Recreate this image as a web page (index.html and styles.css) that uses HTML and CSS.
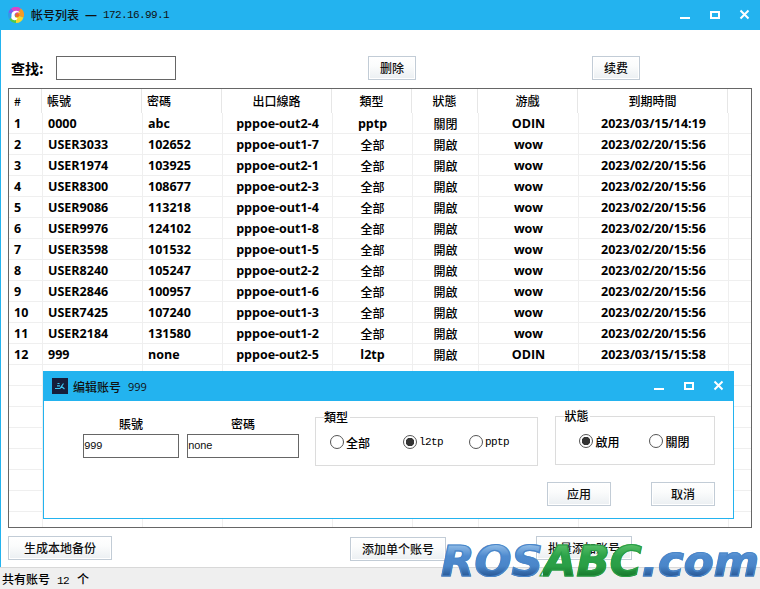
FILE: index.html
```html
<!DOCTYPE html>
<html lang="zh">
<head>
<meta charset="utf-8">
<title>帐号列表</title>
<link rel="stylesheet" href="styles.css">
</head>
<body>
<div class="window">
  <header class="titlebar">
    <svg class="logo" viewBox="0 0 16 16" width="16" height="16">
      <path d="M8 8 L3 1.6 A8 8 0 0 1 13 1.6 Z" fill="#d946c8"/>
      <path d="M8 8 L13 1.6 A8 8 0 0 1 15.5 10.5 Z" fill="#f59a23"/>
      <path d="M8 8 L15.5 10.5 A8 8 0 0 1 8 16 Z" fill="#f4d92e"/>
      <path d="M8 8 L8 16 A8 8 0 0 1 1.2 12 Z" fill="#4fc94a"/>
      <path d="M8 8 L1.2 12 A8 8 0 0 1 0.4 5.5 Z" fill="#2f9be8"/>
      <path d="M8 8 L0.4 5.5 A8 8 0 0 1 3 1.6 Z" fill="#7a5cf0"/>
      <path d="M3.5 9 A4.6 4.6 0 0 1 12 6 A4 4 0 0 0 7 6.4 A3 3 0 0 0 9.6 11 A3 3 0 0 1 3.5 9 Z" fill="#fff"/>
      <circle cx="9.2" cy="8.2" r="2" fill="#f0682a"/>
    </svg>
    <span class="title-text">帐号列表</span>
    <span class="title-dash">一</span>
    <span class="mono title-ip">172.16.99.1</span>
    <div class="controls">
      <svg viewBox="0 0 30 30" width="30" height="30"><path d="M10 18H20" /></svg>
      <svg viewBox="0 0 30 30" width="30" height="30"><rect x="11" y="12" width="8" height="6"/></svg>
      <svg viewBox="0 0 30 30" width="30" height="30"><path d="M10.5 10.5L18.5 18.5M18.5 10.5L10.5 18.5"/></svg>
    </div>
  </header>

  <main class="content">
    <div class="toolbar">
      <label class="search-label">查找:</label>
      <input class="field search-input" type="text">
      <button class="btn btn-delete">删除</button>
      <button class="btn btn-renew">续费</button>
    </div>

    <div class="table">
      <div class="row head">
        <div class="cell l">#</div><div class="cell l">帳號</div><div class="cell l">密碼</div><div class="cell">出口線路</div><div class="cell">類型</div><div class="cell">狀態</div><div class="cell">游戲</div><div class="cell">到期時間</div><div class="cell"></div>
      </div>
      <div class="row"><div class="cell l b">1</div><div class="cell l b">0000</div><div class="cell l b">abc</div><div class="cell b">pppoe-out2-4</div><div class="cell b">pptp</div><div class="cell">關閉</div><div class="cell b">ODIN</div><div class="cell b">2023/03/15/14:19</div><div class="cell"></div></div>
      <div class="row"><div class="cell l b">2</div><div class="cell l b">USER3033</div><div class="cell l b">102652</div><div class="cell b">pppoe-out1-7</div><div class="cell">全部</div><div class="cell">開啟</div><div class="cell b">wow</div><div class="cell b">2023/02/20/15:56</div><div class="cell"></div></div>
      <div class="row"><div class="cell l b">3</div><div class="cell l b">USER1974</div><div class="cell l b">103925</div><div class="cell b">pppoe-out2-1</div><div class="cell">全部</div><div class="cell">開啟</div><div class="cell b">wow</div><div class="cell b">2023/02/20/15:56</div><div class="cell"></div></div>
      <div class="row"><div class="cell l b">4</div><div class="cell l b">USER8300</div><div class="cell l b">108677</div><div class="cell b">pppoe-out2-3</div><div class="cell">全部</div><div class="cell">開啟</div><div class="cell b">wow</div><div class="cell b">2023/02/20/15:56</div><div class="cell"></div></div>
      <div class="row"><div class="cell l b">5</div><div class="cell l b">USER9086</div><div class="cell l b">113218</div><div class="cell b">pppoe-out1-4</div><div class="cell">全部</div><div class="cell">開啟</div><div class="cell b">wow</div><div class="cell b">2023/02/20/15:56</div><div class="cell"></div></div>
      <div class="row"><div class="cell l b">6</div><div class="cell l b">USER9976</div><div class="cell l b">124102</div><div class="cell b">pppoe-out1-8</div><div class="cell">全部</div><div class="cell">開啟</div><div class="cell b">wow</div><div class="cell b">2023/02/20/15:56</div><div class="cell"></div></div>
      <div class="row"><div class="cell l b">7</div><div class="cell l b">USER3598</div><div class="cell l b">101532</div><div class="cell b">pppoe-out1-5</div><div class="cell">全部</div><div class="cell">開啟</div><div class="cell b">wow</div><div class="cell b">2023/02/20/15:56</div><div class="cell"></div></div>
      <div class="row"><div class="cell l b">8</div><div class="cell l b">USER8240</div><div class="cell l b">105247</div><div class="cell b">pppoe-out2-2</div><div class="cell">全部</div><div class="cell">開啟</div><div class="cell b">wow</div><div class="cell b">2023/02/20/15:56</div><div class="cell"></div></div>
      <div class="row"><div class="cell l b">9</div><div class="cell l b">USER2846</div><div class="cell l b">100957</div><div class="cell b">pppoe-out1-6</div><div class="cell">全部</div><div class="cell">開啟</div><div class="cell b">wow</div><div class="cell b">2023/02/20/15:56</div><div class="cell"></div></div>
      <div class="row"><div class="cell l b">10</div><div class="cell l b">USER7425</div><div class="cell l b">107240</div><div class="cell b">pppoe-out1-3</div><div class="cell">全部</div><div class="cell">開啟</div><div class="cell b">wow</div><div class="cell b">2023/02/20/15:56</div><div class="cell"></div></div>
      <div class="row"><div class="cell l b">11</div><div class="cell l b">USER2184</div><div class="cell l b">131580</div><div class="cell b">pppoe-out1-2</div><div class="cell">全部</div><div class="cell">開啟</div><div class="cell b">wow</div><div class="cell b">2023/02/20/15:56</div><div class="cell"></div></div>
      <div class="row"><div class="cell l b">12</div><div class="cell l b">999</div><div class="cell l b">none</div><div class="cell b">pppoe-out2-5</div><div class="cell b">l2tp</div><div class="cell">開啟</div><div class="cell b">ODIN</div><div class="cell b">2023/03/15/15:58</div><div class="cell"></div></div>
      <div class="row"><div class="cell"></div><div class="cell"></div><div class="cell"></div><div class="cell"></div><div class="cell"></div><div class="cell"></div><div class="cell"></div><div class="cell"></div><div class="cell"></div></div>
      <div class="row"><div class="cell"></div><div class="cell"></div><div class="cell"></div><div class="cell"></div><div class="cell"></div><div class="cell"></div><div class="cell"></div><div class="cell"></div><div class="cell"></div></div>
      <div class="row"><div class="cell"></div><div class="cell"></div><div class="cell"></div><div class="cell"></div><div class="cell"></div><div class="cell"></div><div class="cell"></div><div class="cell"></div><div class="cell"></div></div>
      <div class="row"><div class="cell"></div><div class="cell"></div><div class="cell"></div><div class="cell"></div><div class="cell"></div><div class="cell"></div><div class="cell"></div><div class="cell"></div><div class="cell"></div></div>
      <div class="row"><div class="cell"></div><div class="cell"></div><div class="cell"></div><div class="cell"></div><div class="cell"></div><div class="cell"></div><div class="cell"></div><div class="cell"></div><div class="cell"></div></div>
      <div class="row"><div class="cell"></div><div class="cell"></div><div class="cell"></div><div class="cell"></div><div class="cell"></div><div class="cell"></div><div class="cell"></div><div class="cell"></div><div class="cell"></div></div>
      <div class="row"><div class="cell"></div><div class="cell"></div><div class="cell"></div><div class="cell"></div><div class="cell"></div><div class="cell"></div><div class="cell"></div><div class="cell"></div><div class="cell"></div></div>
      <div class="row"><div class="cell"></div><div class="cell"></div><div class="cell"></div><div class="cell"></div><div class="cell"></div><div class="cell"></div><div class="cell"></div><div class="cell"></div><div class="cell"></div></div>
    </div>

    <div class="actions">
      <button class="btn btn-backup">生成本地备份</button>
      <button class="btn btn-single">添加单个账号</button>
      <button class="btn btn-batch">批量添加账号</button>
    </div>
  </main>

  <footer class="status">共有账号<span class="mono status-num">12</span>个</footer>
</div>

<section class="dialog">
  <header class="titlebar dialog-bar">
    <svg class="dialog-icon" viewBox="0 0 16 16" width="16" height="16">
      <rect width="16" height="16" fill="#161d3a"/>
      <path d="M3 10.5H8L11.5 5.5M7.5 5.5H5.5M8 7.8H5M9 8L12.5 11" fill="none" stroke="#3cc3f0" stroke-width="1.2"/>
    </svg>
    <span class="dialog-title">编辑账号</span>
    <span class="dialog-num">999</span>
    <div class="controls">
      <svg viewBox="0 0 30 30" width="30" height="30"><path d="M10 18H20" /></svg>
      <svg viewBox="0 0 30 30" width="30" height="30"><rect x="11" y="12" width="8" height="6"/></svg>
      <svg viewBox="0 0 30 30" width="30" height="30"><path d="M10.5 10.5L18.5 18.5M18.5 10.5L10.5 18.5"/></svg>
    </div>
  </header>
  <div class="dialog-body">
    <div class="dialog-form">
      <div class="pair pair-user">
        <label class="pair-label">賬號</label>
        <input class="field mono pair-input" type="text" value="999">
      </div>
      <div class="pair pair-pass">
        <label class="pair-label">密碼</label>
        <input class="field mono pair-input" type="text" value="none">
      </div>
      <div class="group group-type">
        <span class="legend">類型</span>
        <span class="radio-item r-all"><i class="radio"></i>全部</span>
        <span class="radio-item r-l2tp"><i class="radio on"></i><span class="mono">l2tp</span></span>
        <span class="radio-item"><i class="radio"></i><span class="mono">pptp</span></span>
      </div>
      <div class="group group-state">
        <span class="legend">狀態</span>
        <span class="radio-item r-on"><i class="radio on"></i>啟用</span>
        <span class="radio-item"><i class="radio"></i>關閉</span>
      </div>
    </div>
    <div class="dialog-actions">
      <button class="btn btn-dlg">应用</button>
      <button class="btn btn-dlg">取消</button>
    </div>
  </div>
</section>

<div class="watermark"><span class="wm-blue">ROS</span><span class="wm-green">ABC</span><span class="wm-blue">.com</span></div>
</body>
</html>
```

FILE: styles.css
```css
* { box-sizing: border-box; }
html, body { margin: 0; padding: 0; }
body {
  width: 760px;
  height: 589px;
  overflow: hidden;
  position: relative;
  background: #fff;
  color: #000;
  font-family: "Noto Sans CJK SC", "Noto Sans CJK TC", sans-serif;
  font-size: 12px;
  font-weight: 500;
}
.mono {
  font-family: "Liberation Mono", "Noto Sans CJK SC", monospace;
  font-size: 11px;
  letter-spacing: -0.6px;
  font-weight: 400;
}

.window { height: 589px; display: flex; flex-direction: column; }

.titlebar {
  height: 30px;
  flex: none;
  background: #23b3ef;
  display: flex;
  align-items: center;
  color: #111;
}
.logo { margin-left: 8px; margin-top: -1px; }
.title-text { margin-left: 7px; line-height: 30px; }
.title-dash { margin-left: 6px; }
.title-ip { margin-left: 6px; }
.controls { margin-left: auto; display: flex; }
.controls svg { display: block; fill: none; stroke: #fff; stroke-width: 2; }

.content {
  flex: 1;
  border-left: 1px solid #23b3ef;
  padding: 26px 0 0 7px;
  display: flex;
  flex-direction: column;
}

.toolbar { display: flex; align-items: center; height: 24px; }
.search-label { font-size: 14px; font-weight: 700; margin-left: 3px; width: 45px; }
.field {
  border: 1px solid #666;
  background: #fff;
  height: 24px;
  padding: 0;
  outline: none;
  color: #111;
}
.search-input { width: 120px; }
.btn {
  height: 24px;
  border: 1px solid #c2ccd6;
  background: linear-gradient(#fff, #fbfcfc 40%, #ebeff2);
  box-shadow: inset 0 0 0 1px #fff;
  padding: 0 0 2px;
  font: inherit;
  color: #111;
}
.btn-delete { width: 48px; margin-left: 192px; }
.btn-renew { width: 48px; margin-left: 176px; }

.table {
  width: 744px;
  height: 440px;
  margin-top: 8px;
  border: 1px solid #666;
  overflow: hidden;
  flex: none;
}
.row {
  display: grid;
  grid-template-columns: 34px 100px 80px 110px 80px 66px 100px 150px 1fr;
  height: 21px;
  border-bottom: 1px solid #efefef;
}
.row.head {
  grid-template-columns: 33px 100px 80px 110px 80px 66px 100px 150px 1fr;
  height: 24px;
  border-bottom: 0;
}
.cell {
  border-right: 1px solid #efefef;
  text-align: center;
  line-height: 21px;
  white-space: nowrap;
  overflow: hidden;
}
.head .cell { border-right-color: #e6e6e6; line-height: 23px; }
.cell:last-child { border-right: 0; }
.cell.l { text-align: left; padding-left: 5px; }
.b { font-family: "Open Sans", sans-serif; font-weight: 700; font-size: 12.5px; }

.actions { display: flex; align-items: flex-start; margin-top: 8px; }
.btn-backup { width: 104px; }
.btn-single { width: 96px; margin-left: 238px; margin-top: 1px; }
.btn-batch { width: 96px; margin-left: 90px; }

.status {
  height: 22px;
  flex: none;
  background: #efefef;
  border-top: 1px solid #d8d8d8;
  padding-left: 2px;
  line-height: 21px;
}
.status-num { margin: 0 8px 0 7px; }

.dialog {
  position: absolute;
  left: 43px;
  top: 371px;
  width: 691px;
  height: 148px;
  background: #fff;
  border: 1px solid #23b3ef;
  display: flex;
  flex-direction: column;
}
.dialog-bar { height: 29px; }
.dialog-icon { margin-left: 8px; margin-top: -2px; }
.dialog-title { margin-left: 5px; margin-top: -1px; }
.dialog-num { margin-left: 7px; margin-top: -1px; font-family: "Open Sans", sans-serif; font-size: 11px; }
.dialog-bar .controls { margin-right: -1px; align-self: flex-start; margin-top: -1px; }

.dialog-body { padding: 0 18px 0 39px; }
.dialog-form { display: flex; height: 81px; align-items: flex-start; }
.pair { display: flex; flex-direction: column; align-items: center; margin-top: 14px; margin-right: 8px; }
.pair-label { line-height: 18px; height: 18px; margin-bottom: 1px; }
.pair-user .pair-input { width: 96px; }
.pair-pass .pair-input { width: 112px; }
.pair-pass { margin-right: 16px; }
.pair-input { height: 24px; }

.group {
  position: relative;
  border: 1px solid #dcdcdc;
  display: flex;
  align-items: center;
  height: 49px;
  padding-top: 1px;
}
.group-type { width: 224px; margin-top: 16px; padding-left: 14px; }
.group-state { width: 160px; margin-top: 15px; margin-left: 17px; padding-left: 23px; }
.legend {
  position: absolute;
  top: -9px;
  left: 8px;
  padding: 0 2px 0 0;
  background: #fff;
  line-height: 16px;
}
.radio-item { display: inline-flex; align-items: center; gap: 2px; }
.r-all { width: 73px; }
.r-l2tp { width: 66px; }
.r-on { width: 70px; }
.radio {
  width: 14px;
  height: 14px;
  border: 1px solid #555;
  border-radius: 50%;
  background: #fff;
  flex: none;
  display: block;
}
.radio.on { background: radial-gradient(circle, #333 4px, #fff 4.5px); }

.dialog-actions { display: flex; justify-content: flex-end; gap: 40px; padding-top: 0; }
.btn-dlg { width: 64px; }

.watermark {
  position: absolute;
  left: 441px;
  top: 535px;
  font-family: "DejaVu Sans", sans-serif;
  font-weight: 700;
  font-style: italic;
  font-size: 43.5px;
  line-height: 52px;
  white-space: nowrap;
}
.wm-blue, .wm-green {
  -webkit-background-clip: text;
  background-clip: text;
  color: transparent;
}
.wm-blue {
  background-image: linear-gradient(#8fbbe6 18%, #4f8bcf 40%, #4a86c9 60%, #2a5a98 80%);
  -webkit-text-stroke: 1.2px #4a86c9;
}
.wm-green {
  background-image: linear-gradient(#55bd66 18%, #2ca34a 40%, #2a9e46 60%, #177a2d 80%);
  -webkit-text-stroke: 1.2px #2a9e46;
}
```
